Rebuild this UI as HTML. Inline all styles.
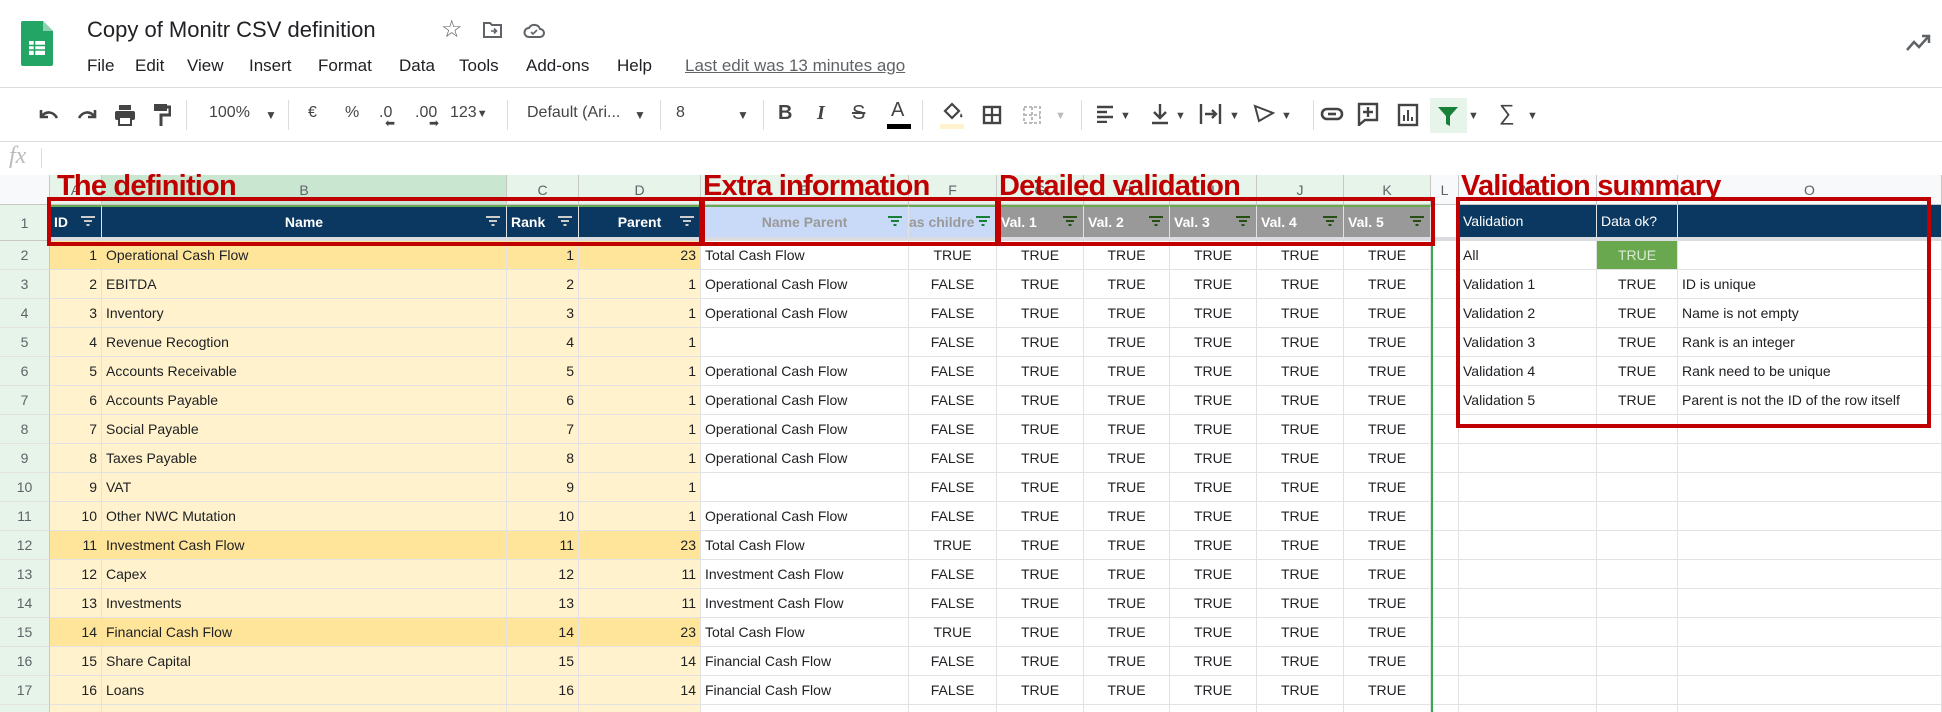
<!DOCTYPE html>
<html><head><meta charset="utf-8">
<style>
*{box-sizing:border-box;margin:0;padding:0}
html,body{width:1942px;height:712px;overflow:hidden}
body{background:#fff;font-family:"Liberation Sans",Arial,sans-serif;position:relative;color:#202124}
.a{position:absolute;white-space:nowrap}
.menu{font-size:17px;top:56px;color:#202124}
.tb{top:104px;font-size:16px;color:#444}
.sep{position:absolute;top:100px;width:1px;height:30px;background:#dadce0}
table{position:absolute;left:0;top:175px;border-collapse:separate;border-spacing:0;table-layout:fixed;width:1942px}
td{border-right:1px solid #e2e2e2;border-bottom:1px solid #e2e2e2;font-size:14px;height:29px;padding:0 4px;overflow:hidden;white-space:nowrap;line-height:28px}
tr.ch td{height:30px;background:#e6f4ea;color:#5f6368;text-align:center;border-color:#c7c7c7;font-size:14px}
tr.ch td.g{background:#f8f9fa}
tr.ch td.sel{background:#c9e6d1}
td.rh{background:#e6f4ea;color:#5f6368;text-align:center;border-right:1px solid #c7c7c7;padding:0}
tr.r1 td{height:36px;border-top:2px solid #6aa84f;border-bottom:4px solid #dadce0;font-weight:bold;color:#fff;position:relative;line-height:28px}
tr.r1 td.rh{border-top:none;border-bottom:1px solid #c7c7c7;font-weight:normal;color:#5f6368}
.nv{background:#0b3861}
.lb{background:#c9daf8;color:#999 !important}
.gy{background:#999999}
.y{background:#fff2cc}
.yy{background:#ffe599}
.r{text-align:right}.c{text-align:center}
.f{position:absolute;right:6px;top:9px;width:14px;height:10px}
.lbl{position:absolute;color:#c00000;font-weight:bold;font-size:29px;letter-spacing:-0.8px;top:170px;white-space:nowrap}
.box{position:absolute;border:4px solid #c00000}
.gl{position:absolute;left:1431px;top:205px;width:2px;height:507px;background:#34a853}
</style></head><body>

<svg class="a" style="left:21px;top:21px" width="32" height="45" viewBox="0 0 32 45">
<path d="M2 0h20l10 10v33a2 2 0 0 1-2 2H2a2 2 0 0 1-2-2V2a2 2 0 0 1 2-2z" fill="#23a566"/>
<path d="M22 0v10h10z" fill="#8ed1b1"/>
<rect x="8" y="20" width="16" height="14" fill="#fff"/>
<path d="M8 24.5h16M8 29h16M13.5 20v14" stroke="#23a566" stroke-width="1.6"/>
</svg>
<div class="a" style="left:87px;top:17px;font-size:22px;color:#202124">Copy of Monitr CSV definition</div>
<div class="a" style="left:441px;top:15px;font-size:24px;color:#5f6368">☆</div>
<svg class="a" style="left:483px;top:21px" width="20" height="18" viewBox="0 0 20 18"><path d="M1 2h6l2 2h9v12H1z" fill="none" stroke="#5f6368" stroke-width="2"/><path d="M8 10h5M11 7.5l2.5 2.5-2.5 2.5" stroke="#5f6368" stroke-width="1.6" fill="none"/></svg>
<svg class="a" style="left:523px;top:21px" width="22" height="18" viewBox="0 0 22 18"><path d="M6 16h11a4 4 0 0 0 0-8 6 6 0 0 0-11-1 4.5 4.5 0 0 0 0 9z" fill="none" stroke="#5f6368" stroke-width="2"/><path d="M8 11l2 2 4-4" stroke="#5f6368" stroke-width="1.6" fill="none"/></svg>
<div class="a menu" style="left:87px">File</div>
<div class="a menu" style="left:135px">Edit</div>
<div class="a menu" style="left:187px">View</div>
<div class="a menu" style="left:249px">Insert</div>
<div class="a menu" style="left:318px">Format</div>
<div class="a menu" style="left:399px">Data</div>
<div class="a menu" style="left:459px">Tools</div>
<div class="a menu" style="left:526px">Add-ons</div>
<div class="a menu" style="left:617px">Help</div>
<div class="a menu" style="left:685px;color:#5f6368;text-decoration:underline">Last edit was 13 minutes ago</div>
<svg class="a" style="left:1905px;top:33px" width="26" height="20" viewBox="0 0 26 20"><path d="M2 17l7-8 5 5 9-10" stroke="#5f6368" stroke-width="2.5" fill="none"/><path d="M17 3h7v7" stroke="#5f6368" stroke-width="2.5" fill="none"/></svg>

<div class="a" style="left:0;top:87px;width:1942px;height:1px;background:#dadce0"></div>
<div class="a" style="left:0;top:141px;width:1942px;height:1px;background:#dadce0"></div>
<svg class="a" style="left:38px;top:106px" width="22" height="16" viewBox="0 0 22 16"><path d="M3 4v7h7" fill="none" stroke="#444" stroke-width="2.6"/><path d="M4 10c4-5 11-5 15 2" fill="none" stroke="#444" stroke-width="2.6"/></svg>
<svg class="a" style="left:76px;top:106px" width="22" height="16" viewBox="0 0 22 16"><path d="M19 4v7h-7" fill="none" stroke="#444" stroke-width="2.6"/><path d="M18 10c-4-5-11-5-15 2" fill="none" stroke="#444" stroke-width="2.6"/></svg>
<svg class="a" style="left:114px;top:104px" width="22" height="22" viewBox="0 0 22 22"><rect x="5" y="1" width="12" height="5" fill="#444"/><rect x="1" y="7" width="20" height="9" rx="2" fill="#444"/><rect x="5" y="13" width="12" height="8" fill="#fff" stroke="#444" stroke-width="2"/></svg>
<svg class="a" style="left:153px;top:103px" width="18" height="24" viewBox="0 0 18 24"><rect x="1" y="1" width="13" height="7" fill="#444"/><path d="M14 4h3v8H8v11" fill="none" stroke="#444" stroke-width="3"/></svg>
<div class="sep" style="left:186px"></div>
<div class="a tb" style="left:209px">100%</div><div class="a tb" style="left:265px;font-size:12px;top:108px">▼</div>
<div class="sep" style="left:288px"></div>
<div class="a tb" style="left:308px">€</div>
<div class="a tb" style="left:345px">%</div>
<div class="a tb" style="left:379px">.0<span style="position:absolute;left:6px;top:12px;font-size:12px">⬅</span></div>
<div class="a tb" style="left:415px">.00<span style="position:absolute;left:14px;top:12px;font-size:12px">➡</span></div>
<div class="a tb" style="left:450px">123<span style="font-size:11px">▼</span></div>
<div class="sep" style="left:507px"></div>
<div class="a tb" style="left:527px">Default (Ari...</div><div class="a tb" style="left:634px;font-size:12px;top:108px">▼</div>
<div class="sep" style="left:660px"></div>
<div class="a tb" style="left:676px">8</div><div class="a tb" style="left:737px;font-size:12px;top:108px">▼</div>
<div class="sep" style="left:763px"></div>
<div class="a tb" style="left:778px;font-weight:bold;font-size:20px;top:102px">B</div>
<div class="a tb" style="left:817px;font-style:italic;font-size:20px;top:102px;font-family:'Liberation Serif',serif;font-weight:bold">I</div>
<div class="a tb" style="left:852px;font-size:20px;top:102px;text-decoration:line-through">S</div>
<div class="a tb" style="left:891px;font-size:20px;top:99px">A</div>
<div class="a" style="left:887px;top:124px;width:24px;height:5px;background:#000"></div>
<div class="sep" style="left:922px"></div>
<svg class="a" style="left:942px;top:101px" width="22" height="20" viewBox="0 0 22 20"><path d="M3 10l7-7 7 7-7 7z" fill="none" stroke="#444" stroke-width="2.2"/><path d="M19 12c1 2 2 3 1 4s-2 0-2-1z" fill="#444"/></svg>
<div class="a" style="left:940px;top:124px;width:24px;height:5px;background:#fff2cc"></div>
<svg class="a" style="left:982px;top:105px" width="20" height="20" viewBox="0 0 20 20"><rect x="2" y="2" width="16" height="16" fill="none" stroke="#444" stroke-width="2.4"/><path d="M10 2v16M2 10h16" stroke="#444" stroke-width="2.2"/></svg>
<svg class="a" style="left:1022px;top:105px" width="20" height="20" viewBox="0 0 20 20"><path d="M2 2h16v16H2zM10 2v16M2 10h16" fill="none" stroke="#bbb" stroke-width="2" stroke-dasharray="3 2"/></svg>
<div class="a tb" style="left:1055px;font-size:11px;top:110px;color:#bbb">▼</div>
<div class="sep" style="left:1081px"></div>
<svg class="a" style="left:1096px;top:105px" width="20" height="18" viewBox="0 0 20 18"><path d="M1 2h16M1 7h10M1 12h16M1 17h10" stroke="#444" stroke-width="2.4"/></svg><div class="a tb" style="left:1120px;font-size:11px;top:110px">▼</div>
<svg class="a" style="left:1151px;top:103px" width="18" height="22" viewBox="0 0 18 22"><path d="M9 1v14M3 9l6 6 6-6M1 20h16" fill="none" stroke="#444" stroke-width="2.4"/></svg><div class="a tb" style="left:1175px;font-size:11px;top:110px">▼</div>
<svg class="a" style="left:1199px;top:103px" width="24" height="22" viewBox="0 0 24 22"><path d="M2 1v20M21 1v20M6 11h11M13 7l4 4-4 4" fill="none" stroke="#444" stroke-width="2.4"/></svg><div class="a tb" style="left:1229px;font-size:11px;top:110px">▼</div>
<svg class="a" style="left:1253px;top:103px" width="24" height="20" viewBox="0 0 24 20"><path d="M2 3l18 7-14 8zM2 3l4 15" fill="none" stroke="#444" stroke-width="2"/></svg><div class="a tb" style="left:1281px;font-size:11px;top:110px">▼</div>
<div class="sep" style="left:1313px"></div>
<svg class="a" style="left:1320px;top:107px" width="24" height="14" viewBox="0 0 24 14"><rect x="2" y="2" width="20" height="10" rx="5" fill="none" stroke="#444" stroke-width="2.6"/><path d="M8 7h8" stroke="#444" stroke-width="2.6"/></svg>
<svg class="a" style="left:1357px;top:102px" width="22" height="24" viewBox="0 0 22 24"><path d="M2 2h18v16H8l-6 5z" fill="none" stroke="#444" stroke-width="2.4"/><path d="M11 5v10M6 10h10" stroke="#444" stroke-width="2.4"/></svg>
<svg class="a" style="left:1397px;top:103px" width="22" height="24" viewBox="0 0 22 24"><rect x="2" y="2" width="18" height="20" fill="none" stroke="#444" stroke-width="2.4"/><path d="M7 18v-6M11 18V7M15 18v-4" stroke="#444" stroke-width="2"/></svg>
<div class="a" style="left:1430px;top:98px;width:37px;height:35px;background:#e6f4ea"></div>
<svg class="a" style="left:1437px;top:105px" width="22" height="22" viewBox="0 0 22 22"><path d="M1 2h20l-8 9v10l-4-2v-8z" fill="#188038"/></svg>
<div class="a tb" style="left:1468px;font-size:11px;top:110px">▼</div>
<div class="a tb" style="left:1499px;font-size:22px;top:100px">∑</div><div class="a tb" style="left:1527px;font-size:11px;top:110px">▼</div>
<div class="a" style="left:9px;top:143px;font-size:24px;color:#bbb;font-family:'Liberation Serif',serif;font-style:italic">fx</div>
<div class="a" style="left:41px;top:148px;width:1px;height:20px;background:#dadce0"></div>

<table>
<colgroup><col style="width:50px"><col style="width:52px"><col style="width:405px"><col style="width:72px"><col style="width:122px"><col style="width:208px"><col style="width:88px"><col style="width:87px"><col style="width:86px"><col style="width:87px"><col style="width:87px"><col style="width:87px"><col style="width:28px"><col style="width:138px"><col style="width:81px"><col style="width:264px"></colgroup>
<tr class="ch"><td class="g"></td><td>A</td><td class="sel">B</td><td>C</td><td>D</td><td>E</td><td>F</td><td>G</td><td>H</td><td>I</td><td>J</td><td>K</td><td class="g">L</td><td class="g">M</td><td class="g">N</td><td class="g">O</td></tr>
<tr class="r1"><td class="rh">1</td>
<td class="nv">ID<svg class="f" viewBox="0 0 14 10"><path d="M0 1h14M3 5h8M5.5 9h3" stroke="#ccc" stroke-width="2"/></svg></td>
<td class="nv c">Name<svg class="f" viewBox="0 0 14 10"><path d="M0 1h14M3 5h8M5.5 9h3" stroke="#ccc" stroke-width="2"/></svg></td>
<td class="nv">Rank<svg class="f" viewBox="0 0 14 10"><path d="M0 1h14M3 5h8M5.5 9h3" stroke="#ccc" stroke-width="2"/></svg></td>
<td class="nv c">Parent<svg class="f" viewBox="0 0 14 10"><path d="M0 1h14M3 5h8M5.5 9h3" stroke="#ccc" stroke-width="2"/></svg></td>
<td class="lb c">Name Parent<svg class="f" viewBox="0 0 14 10"><path d="M0 1h14M3 5h8M5.5 9h3" stroke="#188038" stroke-width="2"/></svg></td>
<td class="lb" style="padding:0">as childre<svg class="f" viewBox="0 0 14 10"><path d="M0 1h14M3 5h8M5.5 9h3" stroke="#188038" stroke-width="2"/></svg></td>
<td class="gy">Val. 1<svg class="f" viewBox="0 0 14 10"><path d="M0 1h14M3 5h8M5.5 9h3" stroke="#274e13" stroke-width="2"/></svg></td>
<td class="gy">Val. 2<svg class="f" viewBox="0 0 14 10"><path d="M0 1h14M3 5h8M5.5 9h3" stroke="#274e13" stroke-width="2"/></svg></td>
<td class="gy">Val. 3<svg class="f" viewBox="0 0 14 10"><path d="M0 1h14M3 5h8M5.5 9h3" stroke="#274e13" stroke-width="2"/></svg></td>
<td class="gy">Val. 4<svg class="f" viewBox="0 0 14 10"><path d="M0 1h14M3 5h8M5.5 9h3" stroke="#274e13" stroke-width="2"/></svg></td>
<td class="gy">Val. 5<svg class="f" viewBox="0 0 14 10"><path d="M0 1h14M3 5h8M5.5 9h3" stroke="#274e13" stroke-width="2"/></svg></td>
<td style="border-top:none;background:#fff"></td>
<td class="nv" style="font-weight:normal;border-top:none">Validation</td>
<td class="nv" style="font-weight:normal;border-top:none">Data ok?</td>
<td class="nv" style="border-top:none"></td></tr>
<tr><td class="rh">2</td><td class="yy r">1</td><td class="yy">Operational Cash Flow</td><td class="yy r">1</td><td class="yy r">23</td><td>Total Cash Flow</td><td class="c">TRUE</td><td class="c">TRUE</td><td class="c">TRUE</td><td class="c">TRUE</td><td class="c">TRUE</td><td class="c">TRUE</td><td></td><td>All</td><td class="c" style="background:#6aa84f;color:#d9ead3">TRUE</td><td></td></tr>
<tr><td class="rh">3</td><td class="y r">2</td><td class="y">EBITDA</td><td class="y r">2</td><td class="y r">1</td><td>Operational Cash Flow</td><td class="c">FALSE</td><td class="c">TRUE</td><td class="c">TRUE</td><td class="c">TRUE</td><td class="c">TRUE</td><td class="c">TRUE</td><td></td><td>Validation 1</td><td class="c">TRUE</td><td>ID is unique</td></tr>
<tr><td class="rh">4</td><td class="y r">3</td><td class="y">Inventory</td><td class="y r">3</td><td class="y r">1</td><td>Operational Cash Flow</td><td class="c">FALSE</td><td class="c">TRUE</td><td class="c">TRUE</td><td class="c">TRUE</td><td class="c">TRUE</td><td class="c">TRUE</td><td></td><td>Validation 2</td><td class="c">TRUE</td><td>Name is not empty</td></tr>
<tr><td class="rh">5</td><td class="y r">4</td><td class="y">Revenue Recogtion</td><td class="y r">4</td><td class="y r">1</td><td></td><td class="c">FALSE</td><td class="c">TRUE</td><td class="c">TRUE</td><td class="c">TRUE</td><td class="c">TRUE</td><td class="c">TRUE</td><td></td><td>Validation 3</td><td class="c">TRUE</td><td>Rank is an integer</td></tr>
<tr><td class="rh">6</td><td class="y r">5</td><td class="y">Accounts Receivable</td><td class="y r">5</td><td class="y r">1</td><td>Operational Cash Flow</td><td class="c">FALSE</td><td class="c">TRUE</td><td class="c">TRUE</td><td class="c">TRUE</td><td class="c">TRUE</td><td class="c">TRUE</td><td></td><td>Validation 4</td><td class="c">TRUE</td><td>Rank need to be unique</td></tr>
<tr><td class="rh">7</td><td class="y r">6</td><td class="y">Accounts Payable</td><td class="y r">6</td><td class="y r">1</td><td>Operational Cash Flow</td><td class="c">FALSE</td><td class="c">TRUE</td><td class="c">TRUE</td><td class="c">TRUE</td><td class="c">TRUE</td><td class="c">TRUE</td><td></td><td>Validation 5</td><td class="c">TRUE</td><td>Parent is not the ID of the row itself</td></tr>
<tr><td class="rh">8</td><td class="y r">7</td><td class="y">Social Payable</td><td class="y r">7</td><td class="y r">1</td><td>Operational Cash Flow</td><td class="c">FALSE</td><td class="c">TRUE</td><td class="c">TRUE</td><td class="c">TRUE</td><td class="c">TRUE</td><td class="c">TRUE</td><td></td><td></td><td></td><td></td></tr>
<tr><td class="rh">9</td><td class="y r">8</td><td class="y">Taxes Payable</td><td class="y r">8</td><td class="y r">1</td><td>Operational Cash Flow</td><td class="c">FALSE</td><td class="c">TRUE</td><td class="c">TRUE</td><td class="c">TRUE</td><td class="c">TRUE</td><td class="c">TRUE</td><td></td><td></td><td></td><td></td></tr>
<tr><td class="rh">10</td><td class="y r">9</td><td class="y">VAT</td><td class="y r">9</td><td class="y r">1</td><td></td><td class="c">FALSE</td><td class="c">TRUE</td><td class="c">TRUE</td><td class="c">TRUE</td><td class="c">TRUE</td><td class="c">TRUE</td><td></td><td></td><td></td><td></td></tr>
<tr><td class="rh">11</td><td class="y r">10</td><td class="y">Other NWC Mutation</td><td class="y r">10</td><td class="y r">1</td><td>Operational Cash Flow</td><td class="c">FALSE</td><td class="c">TRUE</td><td class="c">TRUE</td><td class="c">TRUE</td><td class="c">TRUE</td><td class="c">TRUE</td><td></td><td></td><td></td><td></td></tr>
<tr><td class="rh">12</td><td class="yy r">11</td><td class="yy">Investment Cash Flow</td><td class="yy r">11</td><td class="yy r">23</td><td>Total Cash Flow</td><td class="c">TRUE</td><td class="c">TRUE</td><td class="c">TRUE</td><td class="c">TRUE</td><td class="c">TRUE</td><td class="c">TRUE</td><td></td><td></td><td></td><td></td></tr>
<tr><td class="rh">13</td><td class="y r">12</td><td class="y">Capex</td><td class="y r">12</td><td class="y r">11</td><td>Investment Cash Flow</td><td class="c">FALSE</td><td class="c">TRUE</td><td class="c">TRUE</td><td class="c">TRUE</td><td class="c">TRUE</td><td class="c">TRUE</td><td></td><td></td><td></td><td></td></tr>
<tr><td class="rh">14</td><td class="y r">13</td><td class="y">Investments</td><td class="y r">13</td><td class="y r">11</td><td>Investment Cash Flow</td><td class="c">FALSE</td><td class="c">TRUE</td><td class="c">TRUE</td><td class="c">TRUE</td><td class="c">TRUE</td><td class="c">TRUE</td><td></td><td></td><td></td><td></td></tr>
<tr><td class="rh">15</td><td class="yy r">14</td><td class="yy">Financial Cash Flow</td><td class="yy r">14</td><td class="yy r">23</td><td>Total Cash Flow</td><td class="c">TRUE</td><td class="c">TRUE</td><td class="c">TRUE</td><td class="c">TRUE</td><td class="c">TRUE</td><td class="c">TRUE</td><td></td><td></td><td></td><td></td></tr>
<tr><td class="rh">16</td><td class="y r">15</td><td class="y">Share Capital</td><td class="y r">15</td><td class="y r">14</td><td>Financial Cash Flow</td><td class="c">FALSE</td><td class="c">TRUE</td><td class="c">TRUE</td><td class="c">TRUE</td><td class="c">TRUE</td><td class="c">TRUE</td><td></td><td></td><td></td><td></td></tr>
<tr><td class="rh">17</td><td class="y r">16</td><td class="y">Loans</td><td class="y r">16</td><td class="y r">14</td><td>Financial Cash Flow</td><td class="c">FALSE</td><td class="c">TRUE</td><td class="c">TRUE</td><td class="c">TRUE</td><td class="c">TRUE</td><td class="c">TRUE</td><td></td><td></td><td></td><td></td></tr>
<tr><td class="rh">18</td><td class="y r"></td><td class="y"></td><td class="y r"></td><td class="y r"></td><td></td><td></td><td></td><td></td><td></td><td></td><td></td><td></td><td></td><td></td><td></td></tr>
</table>
<div class="gl"></div>

<div class="lbl" style="left:57px">The definition</div>
<div class="lbl" style="left:703px">Extra information</div>
<div class="lbl" style="left:999px">Detailed validation</div>
<div class="lbl" style="left:1461px">Validation summary</div>
<div class="box" style="left:47px;top:197px;width:656px;height:49px"></div>
<div class="box" style="left:701px;top:197px;width:298px;height:49px"></div>
<div class="box" style="left:997px;top:197px;width:438px;height:49px"></div>
<div class="box" style="left:1456px;top:197px;width:475px;height:231px"></div>
</body></html>
